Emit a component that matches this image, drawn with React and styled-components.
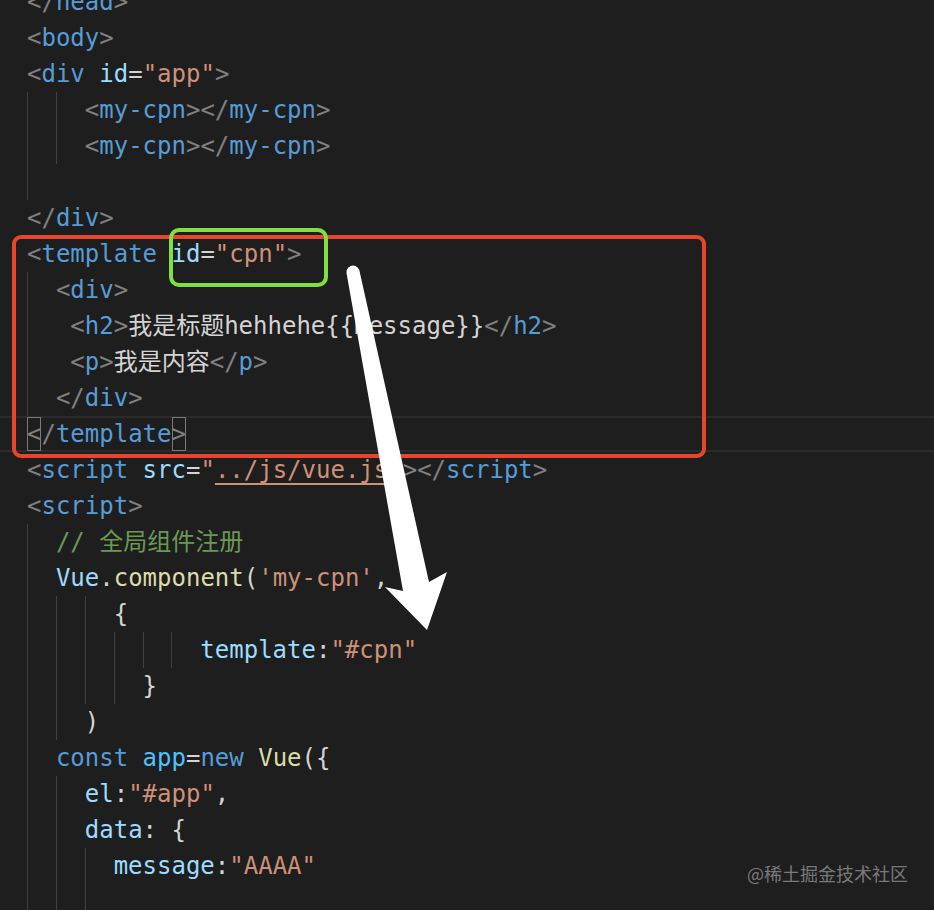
import React from "react";
import styled, { createGlobalStyle, css } from "styled-components";

const GlobalStyle = createGlobalStyle`
  html, body {
    margin: 0;
    background: #1e1e1e;
    overflow: hidden;
  }
`;

const colors = {
  br: "#808080",
  tag: "#569cd6",
  attr: "#9cdcfe",
  str: "#ce9178",
  txt: "#d4d4d4",
  cmt: "#6a9955",
  fn: "#dcdcaa",
  kw: "#569cd6",
  cst: "#4fc1ff",
};

const Editor = styled.div`
  position: relative;
  width: 934px;
  height: 910px;
  overflow: hidden;
  background: #1e1e1e;
`;

const Code = styled.div`
  margin-top: -16px;
  font-family: "DejaVu Sans Mono", "Noto Sans CJK SC", monospace;
  font-size: 24px;
  color: ${colors.txt};
`;

const Line = styled.div`
  height: 36px;
  line-height: 36px;
  padding-left: 27px;
  white-space: pre;
  ${(p) =>
    p.$current &&
    css`
      box-shadow: inset 0 2px 0 #2b2b2b, inset 0 -2px 0 #2b2b2b;
    `}
`;

const Guide = styled.span`
  display: inline-block;
  vertical-align: top;
  box-sizing: border-box;
  width: ${(p) => (p.$half ? "1ch" : "2ch")};
  height: 36px;
  border-left: 1px solid ${(p) => (p.$on ? "#404040" : "transparent")};
`;

const Tok = styled.span`
  color: ${(p) => colors[p.$c] || colors.txt};
  ${(p) =>
    p.$link &&
    css`
      text-decoration: underline;
      text-underline-offset: 5px;
      text-decoration-thickness: 2px;
    `}
`;

const Match = styled.span`
  display: inline-block;
  vertical-align: top;
  margin-top: 1px;
  height: 34px;
  line-height: 34px;
  box-shadow: inset 0 0 0 1px #7a7a7a;
  color: ${colors.br};
`;

const RedBox = styled.div`
  position: absolute;
  left: 12px;
  top: 235px;
  width: 694px;
  height: 223px;
  box-sizing: border-box;
  border: 4px solid #e8452d;
  border-radius: 9px;
  pointer-events: none;
`;

const GreenBox = styled.div`
  position: absolute;
  left: 169px;
  top: 228px;
  width: 159px;
  height: 59px;
  box-sizing: border-box;
  border: 4px solid #80e042;
  border-radius: 10px;
  pointer-events: none;
`;

const ArrowLayer = styled.svg`
  position: absolute;
  left: 0;
  top: 0;
  width: 934px;
  height: 910px;
  pointer-events: none;
`;

const Watermark = styled.div`
  position: absolute;
  right: 26px;
  bottom: 24px;
  font-family: "Noto Sans CJK SC", sans-serif;
  font-size: 18px;
  color: #8a8a8a;
  opacity: 0.85;
`;

function Indent({ spaces = 0, guides = [] }) {
  const units = Math.floor(spaces / 2);
  return (
    <>
      {Array.from({ length: units }, (_, i) => (
        <Guide key={i} $on={guides.includes(i)} />
      ))}
      {spaces % 2 === 1 && <Guide $half />}
    </>
  );
}

const lt = <Tok $c="br">&lt;</Tok>;
const ltSlash = <Tok $c="br">&lt;/</Tok>;
const gt = <Tok $c="br">&gt;</Tok>;

function Tag({ name, close }) {
  return (
    <>
      {close ? ltSlash : lt}
      <Tok $c="tag">{name}</Tok>
      {gt}
    </>
  );
}

export default function App() {
  return (
    <Editor>
      <GlobalStyle />
      <Code>
        <Line><Tag name="head" close /></Line>
        <Line><Tag name="body" /></Line>
        <Line>
          {lt}<Tok $c="tag">div</Tok>{" "}<Tok $c="attr">id</Tok>=<Tok $c="str">"app"</Tok>{gt}
        </Line>
        <Line>
          <Indent spaces={4} guides={[0, 1]} />
          <Tag name="my-cpn" /><Tag name="my-cpn" close />
        </Line>
        <Line>
          <Indent spaces={4} guides={[0, 1]} />
          <Tag name="my-cpn" /><Tag name="my-cpn" close />
        </Line>
        <Line><Indent spaces={2} guides={[0]} /></Line>
        <Line><Tag name="div" close /></Line>
        <Line>
          {lt}<Tok $c="tag">template</Tok>{" "}<Tok $c="attr">id</Tok>=<Tok $c="str">"cpn"</Tok>{gt}
        </Line>
        <Line>
          <Indent spaces={2} guides={[0]} />
          <Tag name="div" />
        </Line>
        <Line>
          <Indent spaces={3} guides={[0, 1]} />
          <Tag name="h2" />
          <Tok>我是标题hehhehe{"{{message}}"}</Tok>
          <Tag name="h2" close />
        </Line>
        <Line>
          <Indent spaces={3} guides={[0, 1]} />
          <Tag name="p" />
          <Tok>我是内容</Tok>
          <Tag name="p" close />
        </Line>
        <Line>
          <Indent spaces={2} guides={[0]} />
          <Tag name="div" close />
        </Line>
        <Line $current>
          <Match>&lt;</Match>
          <Tok $c="br">/</Tok>
          <Tok $c="tag">template</Tok>
          <Match>&gt;</Match>
        </Line>
        <Line>
          {lt}<Tok $c="tag">script</Tok>{" "}<Tok $c="attr">src</Tok>=<Tok $c="str">"</Tok>
          <Tok $c="str" $link>../js/vue.js</Tok>
          <Tok $c="str">"</Tok>{gt}
          <Tag name="script" close />
        </Line>
        <Line><Tag name="script" /></Line>
        <Line>
          <Indent spaces={2} guides={[0]} />
          <Tok $c="cmt">// 全局组件注册</Tok>
        </Line>
        <Line>
          <Indent spaces={2} guides={[0]} />
          <Tok $c="attr">Vue</Tok>.<Tok $c="fn">component</Tok>(<Tok $c="str">'my-cpn'</Tok>,
        </Line>
        <Line>
          <Indent spaces={6} guides={[0, 1, 2]} />
          {"{"}
        </Line>
        <Line>
          <Indent spaces={12} guides={[0, 1, 2, 3, 4, 5]} />
          <Tok $c="attr">template</Tok>:<Tok $c="str">"#cpn"</Tok>
        </Line>
        <Line>
          <Indent spaces={8} guides={[0, 1, 2, 3]} />
          {"}"}
        </Line>
        <Line>
          <Indent spaces={4} guides={[0, 1]} />
          )
        </Line>
        <Line>
          <Indent spaces={2} guides={[0]} />
          <Tok $c="kw">const</Tok>{" "}<Tok $c="cst">app</Tok>=<Tok $c="kw">new</Tok>{" "}
          <Tok $c="fn">Vue</Tok>({"{"}
        </Line>
        <Line>
          <Indent spaces={4} guides={[0, 1]} />
          <Tok $c="attr">el</Tok>:<Tok $c="str">"#app"</Tok>,
        </Line>
        <Line>
          <Indent spaces={4} guides={[0, 1]} />
          <Tok $c="attr">data</Tok>: {"{"}
        </Line>
        <Line>
          <Indent spaces={6} guides={[0, 1, 2]} />
          <Tok $c="attr">message</Tok>:<Tok $c="str">"AAAA"</Tok>
        </Line>
        <Line><Indent spaces={6} guides={[0, 1, 2]} /></Line>
      </Code>

      <RedBox />
      <GreenBox />

      <ArrowLayer viewBox="0 0 934 910">
        <circle cx="353" cy="272" r="6.5" fill="#fff" />
        <polygon
          points="346.5,273 403,591 385,587 427,630 447,572 429,582 359.5,271"
          fill="#fff"
        />
      </ArrowLayer>

      <Watermark>@稀土掘金技术社区</Watermark>
    </Editor>
  );
}
